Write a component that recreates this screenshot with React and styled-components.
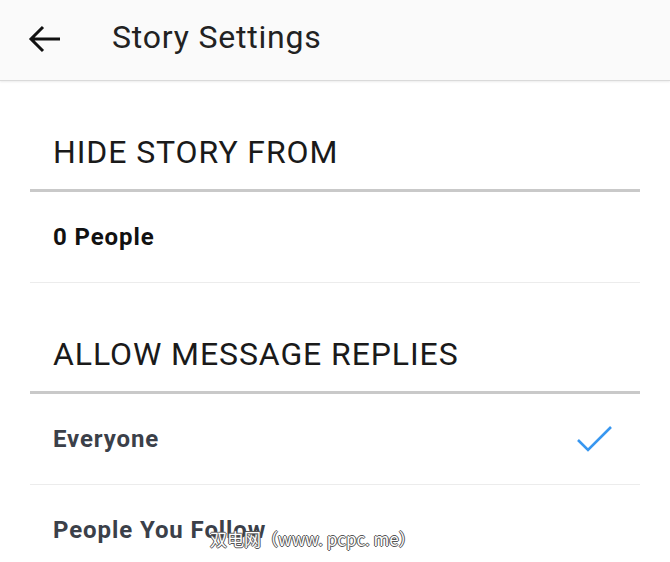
import React from 'react';
import styled, { createGlobalStyle } from 'styled-components';

const Global = createGlobalStyle`
  html, body { margin: 0; padding: 0; background: #fff; }
  body { font-family: Roboto, "Noto Sans", sans-serif; }
`;

const Page = styled.div`
  position: relative;
  width: 670px;
  height: 562px;
  overflow: hidden;
  background: #fff;
`;

const Header = styled.header`
  height: 80px;
  display: flex;
  align-items: center;
  background: #fafafa;
  border-bottom: 1px solid #dadada;
  box-shadow: 0 1px 2px rgba(0, 0, 0, 0.08);
`;

const BackButton = styled.button`
  width: 112px;
  height: 80px;
  border: 0;
  padding: 0 0 2px 28px;
  background: none;
  display: flex;
  align-items: center;
`;

const Title = styled.h1`
  margin: 0;
  font-size: 32px;
  font-weight: 400;
  letter-spacing: 0.8px;
  color: #222;
  padding-bottom: 6px;
`;

const Section = styled.section`
  padding: 0 30px;
`;

const SectionTitle = styled.h2`
  margin: 0;
  height: 111px;
  display: flex;
  align-items: flex-end;
  padding: 0 23px 17px;
  font-size: 32px;
  line-height: 40px;
  font-weight: 400;
  letter-spacing: 0.9px;
  color: #1a1a1a;
  border-bottom: 3px solid #c9c9c9;
  box-sizing: border-box;
`;

const Row = styled.div`
  height: 90px;
  display: flex;
  align-items: center;
  justify-content: space-between;
  padding: 0 26px 0 23px;
  border-bottom: 1px solid #ececec;
  font-size: 24px;
  font-weight: 700;
  letter-spacing: 0.9px;
  color: ${p => (p.dark ? '#111' : '#3b4049')};
`;

const Watermark = styled.div`
  position: absolute;
  left: 210px;
  top: 526px;
  font-family: "Noto Sans CJK SC", sans-serif;
  font-size: 17px;
  color: #fff;
  text-shadow: -1px 0 0 #555, 1px 0 0 #555, 0 -1px 0 #555, 0 1px 0 #555;
`;

const Check = () => (
  <svg width="38" height="28" viewBox="0 0 38 28">
    <path d="M2 15 L12 25 L35 2" fill="none" stroke="#3897f0" strokeWidth="2.6" />
  </svg>
);

const Arrow = () => (
  <svg width="34" height="30" viewBox="0 0 34 30">
    <path d="M32 15 H4 M15 3 L3 15 L15 27" fill="none" stroke="#111" strokeWidth="3" />
  </svg>
);

export default function App() {
  return (
    <Page>
      <Global />
      <Header>
        <BackButton><Arrow /></BackButton>
        <Title>Story Settings</Title>
      </Header>
      <Section>
        <SectionTitle>HIDE STORY FROM</SectionTitle>
        <Row dark>0 People</Row>
        <SectionTitle>ALLOW MESSAGE REPLIES</SectionTitle>
        <Row>Everyone<Check /></Row>
        <Row>People You Follow</Row>
      </Section>
      <Watermark>双电网（www. pcpc. me）</Watermark>
    </Page>
  );
}
